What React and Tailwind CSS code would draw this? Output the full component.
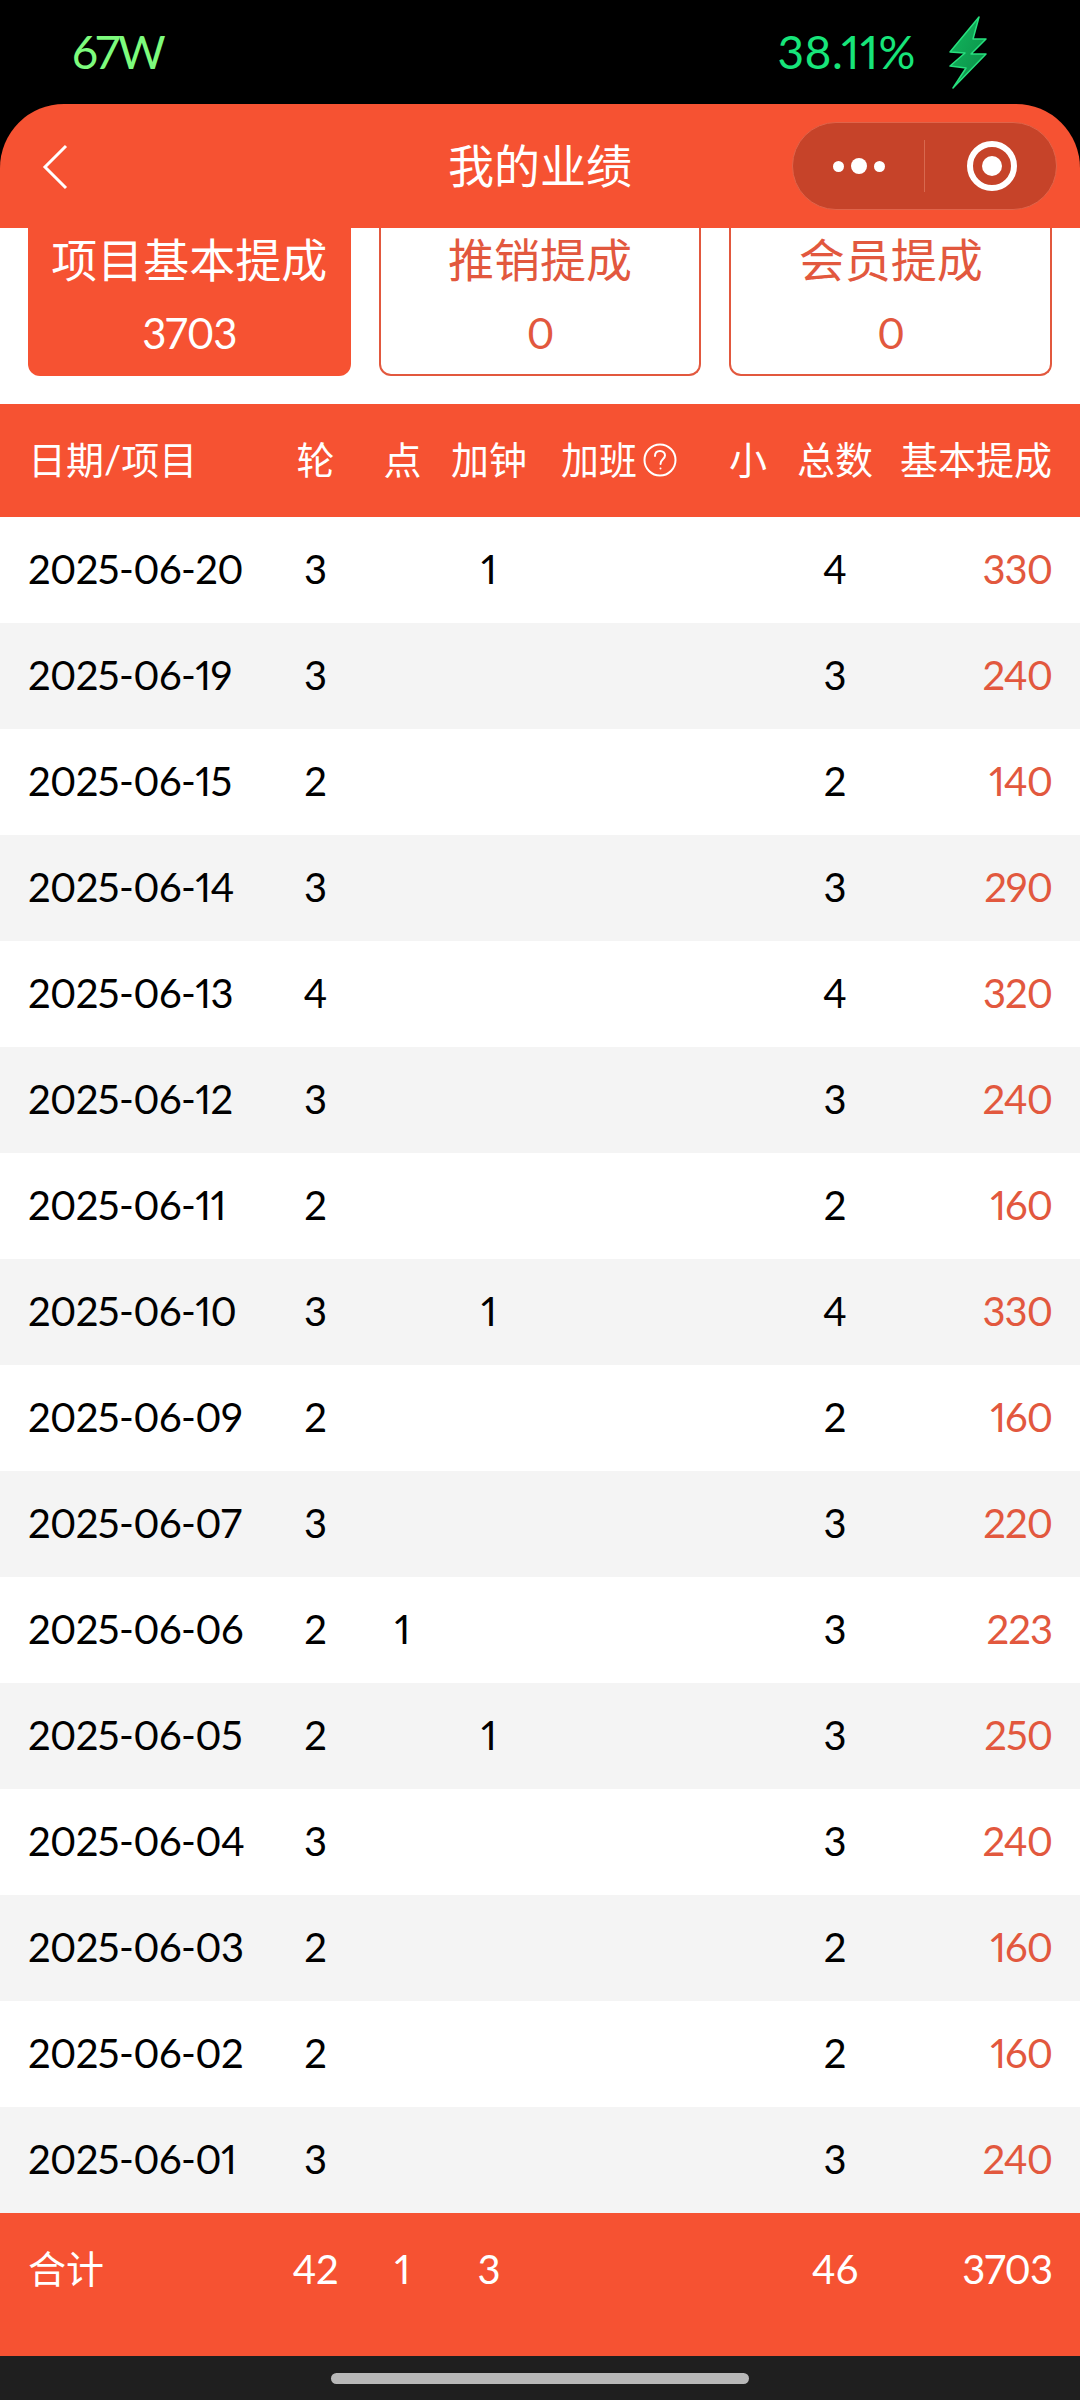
const FONT = "font-['Lato','Noto_Sans_CJK_SC',sans-serif]";
const COLS = 'grid grid-cols-[244px_87px_87px_86px_174px_84px_90px_172px] items-center px-[28px]';

const rows = [
  ['2025-06-20', 3, '', 1, 4, 330],
  ['2025-06-19', 3, '', '', 3, 240],
  ['2025-06-15', 2, '', '', 2, 140],
  ['2025-06-14', 3, '', '', 3, 290],
  ['2025-06-13', 4, '', '', 4, 320],
  ['2025-06-12', 3, '', '', 3, 240],
  ['2025-06-11', 2, '', '', 2, 160],
  ['2025-06-10', 3, '', 1, 4, 330],
  ['2025-06-09', 2, '', '', 2, 160],
  ['2025-06-07', 3, '', '', 3, 220],
  ['2025-06-06', 2, 1, '', 3, 223],
  ['2025-06-05', 2, '', 1, 3, 250],
  ['2025-06-04', 3, '', '', 3, 240],
  ['2025-06-03', 2, '', '', 2, 160],
  ['2025-06-02', 2, '', '', 2, 160],
  ['2025-06-01', 3, '', '', 3, 240],
];

function Bolt() {
  return (
    <svg width="38" height="73" viewBox="0 0 38 73">
      <defs>
        <linearGradient id="bolt" x1="0" y1="0" x2="1" y2="1">
          <stop offset="0" stopColor="#12b95f" />
          <stop offset="1" stopColor="#0b8a45" />
        </linearGradient>
      </defs>
      <path
        d="M30 1 L1 36 L16 37 L1 50 L17 52 L4 72 L37 38 L22 38 L37 23 L24 23 Z"
        fill="url(#bolt)"
        stroke="#27e07e"
        strokeWidth="1.5"
        strokeLinejoin="round"
      />
    </svg>
  );
}

function Card({ title, value, active }) {
  return (
    <div
      className={
        active
          ? 'h-[148px] rounded-b-[12px] bg-[#f65232] text-white flex flex-col items-center'
          : 'h-[148px] rounded-b-[12px] bg-white border-2 border-t-0 border-[#e2583e] text-[#e2583e] flex flex-col items-center'
      }
    >
      <div className="text-[46px] leading-[62px] mt-[1px]">{title}</div>
      <div className="text-[42px] leading-[50px] mt-[17px] tracking-[-1px]">{value}</div>
    </div>
  );
}

export default function App() {
  return (
    <div className={`w-[1080px] h-[2400px] bg-black flex flex-col overflow-hidden proportional-nums ${FONT}`}>
      {/* status bar */}
      <div className="h-[104px] flex items-center justify-between pl-[72px] pr-[93px] shrink-0">
        <span className="text-[46px] text-[#7dfb7d] leading-none tracking-[-2px]">67W</span>
        <div className="flex items-center gap-[33px]">
          <span className="text-[46px] text-[#17e57a] leading-none tracking-[0.5px]">38.11%</span>
          <Bolt />
        </div>
      </div>

      {/* title bar */}
      <div className="relative h-[124px] shrink-0 bg-[#f65232] rounded-t-[64px] flex items-center justify-center pb-[2px]">
        <svg className="absolute left-[40px] top-[40px]" width="30" height="46" viewBox="0 0 30 46" fill="none">
          <path d="M26 2 L5 23 L26 44" stroke="white" strokeWidth="3" />
        </svg>
        <span className="text-[46px] text-white">我的业绩</span>
        <div className="absolute left-[792px] top-[18px] w-[265px] h-[88px] rounded-full bg-[#c64329] border border-[#e0644a] flex items-center">
          <div className="w-[132px] h-[52px] border-r border-[#d8694f] flex items-center justify-center gap-[7px]">
            <span className="w-[11px] h-[11px] rounded-full bg-white" />
            <span className="w-[16px] h-[16px] rounded-full bg-white" />
            <span className="w-[11px] h-[11px] rounded-full bg-white" />
          </div>
          <div className="flex-1 flex items-center justify-center pl-[3px]">
            <div className="w-[50px] h-[50px] rounded-full border-[6px] border-white flex items-center justify-center">
              <span className="w-[20px] h-[20px] rounded-full bg-white" />
            </div>
          </div>
        </div>
      </div>

      {/* page */}
      <div className="flex-1 bg-white flex flex-col">
        <div className="grid grid-cols-3 gap-[28px] px-[28px]">
          <Card title="项目基本提成" value="3703" active />
          <Card title="推销提成" value="0" />
          <Card title="会员提成" value="0" />
        </div>

        <div className={`${COLS} h-[113px] mt-[28px] pb-[2px] bg-[#f65232] text-white text-[38px]`}>
          <div>日期/项目</div>
          <div className="text-center">轮</div>
          <div className="text-center">点</div>
          <div className="text-center">加钟</div>
          <div className="flex items-center justify-center gap-[6px]">
            加班
            <svg width="34" height="34" viewBox="0 0 34 34" fill="none" stroke="white" strokeWidth="2">
              <circle cx="17" cy="17" r="15.5" />
              <path d="M12 13 C12 9.5 14.5 8 17 8 C20 8 22 10 22 12.5 C22 16 17.5 16 17.5 21" strokeLinecap="round" />
              <circle cx="17.5" cy="25.5" r="1" fill="white" stroke="none" />
            </svg>
          </div>
          <div className="text-center">小</div>
          <div className="text-center">总数</div>
          <div className="text-right">基本提成</div>
        </div>

        <div className="flex flex-col">
          {rows.map((r, i) => (
            <div
              key={r[0]}
              className={`${COLS} h-[106px] pb-[2px] text-[40px] text-black ${i % 2 ? 'bg-[#f4f4f4]' : 'bg-white'}`}
            >
              <div className="tracking-[-0.6px]">{r[0]}</div>
              <div className="text-center">{r[1]}</div>
              <div className="text-center">{r[2]}</div>
              <div className="text-center">{r[3]}</div>
              <div />
              <div />
              <div className="text-center">{r[4]}</div>
              <div className="text-right tracking-[-1px] text-[#e2583e]">{r[5]}</div>
            </div>
          ))}
        </div>

        <div className={`${COLS} flex-1 bg-[#f65232] text-white text-[40px] pb-[32px]`}>
          <div className="text-[38px]">合计</div>
          <div className="text-center">42</div>
          <div className="text-center">1</div>
          <div className="text-center">3</div>
          <div />
          <div />
          <div className="text-center">46</div>
          <div className="text-right tracking-[-1px]">3703</div>
        </div>
      </div>

      {/* nav bar */}
      <div className="h-[44px] shrink-0 bg-[#1f1f1f] flex justify-center pt-[17px]">
        <div className="w-[418px] h-[11px] rounded-full bg-[#b8b8b8]" />
      </div>
    </div>
  );
}
